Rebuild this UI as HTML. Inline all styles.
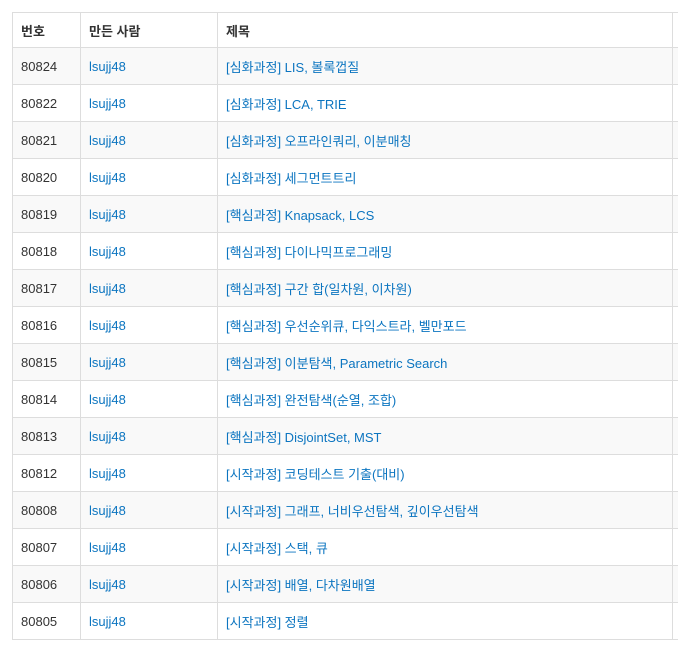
<!DOCTYPE html>
<html><head><meta charset="utf-8"><style>
html,body{margin:0;padding:0;background:#fff;overflow:hidden;width:678px;height:652px}
table{position:absolute;left:12px;top:12px;border-collapse:collapse;table-layout:fixed;width:720px;font-family:"Liberation Sans","Noto Sans CJK KR",sans-serif;font-size:13px;color:#333}
td,th{border:1px solid #ddd;padding:0 8px;text-align:left;white-space:nowrap;overflow:hidden}
th{height:34px;font-weight:bold;font-size:13px;color:#333}
td{height:36px}
tbody tr:nth-child(odd){background:#f9f9f9}
a{color:#0c75c0;text-decoration:none}
</style></head><body>
<table>
<colgroup><col style="width:68px"><col style="width:137px"><col style="width:455px"><col style="width:60px"></colgroup>
<thead><tr><th>번호</th><th>만든 사람</th><th>제목</th><th></th></tr></thead>
<tbody>
<tr><td>80824</td><td><a>lsujj48</a></td><td><a>[심화과정] LIS, 볼록껍질</a></td><td></td></tr>
<tr><td>80822</td><td><a>lsujj48</a></td><td><a>[심화과정] LCA, TRIE</a></td><td></td></tr>
<tr><td>80821</td><td><a>lsujj48</a></td><td><a>[심화과정] 오프라인쿼리, 이분매칭</a></td><td></td></tr>
<tr><td>80820</td><td><a>lsujj48</a></td><td><a>[심화과정] 세그먼트트리</a></td><td></td></tr>
<tr><td>80819</td><td><a>lsujj48</a></td><td><a>[핵심과정] Knapsack, LCS</a></td><td></td></tr>
<tr><td>80818</td><td><a>lsujj48</a></td><td><a>[핵심과정] 다이나믹프로그래밍</a></td><td></td></tr>
<tr><td>80817</td><td><a>lsujj48</a></td><td><a>[핵심과정] 구간 합(일차원, 이차원)</a></td><td></td></tr>
<tr><td>80816</td><td><a>lsujj48</a></td><td><a>[핵심과정] 우선순위큐, 다익스트라, 벨만포드</a></td><td></td></tr>
<tr><td>80815</td><td><a>lsujj48</a></td><td><a>[핵심과정] 이분탐색, Parametric Search</a></td><td></td></tr>
<tr><td>80814</td><td><a>lsujj48</a></td><td><a>[핵심과정] 완전탐색(순열, 조합)</a></td><td></td></tr>
<tr><td>80813</td><td><a>lsujj48</a></td><td><a>[핵심과정] DisjointSet, MST</a></td><td></td></tr>
<tr><td>80812</td><td><a>lsujj48</a></td><td><a>[시작과정] 코딩테스트 기출(대비)</a></td><td></td></tr>
<tr><td>80808</td><td><a>lsujj48</a></td><td><a>[시작과정] 그래프, 너비우선탐색, 깊이우선탐색</a></td><td></td></tr>
<tr><td>80807</td><td><a>lsujj48</a></td><td><a>[시작과정] 스택, 큐</a></td><td></td></tr>
<tr><td>80806</td><td><a>lsujj48</a></td><td><a>[시작과정] 배열, 다차원배열</a></td><td></td></tr>
<tr><td>80805</td><td><a>lsujj48</a></td><td><a>[시작과정] 정렬</a></td><td></td></tr>
</tbody></table>
</body></html>
